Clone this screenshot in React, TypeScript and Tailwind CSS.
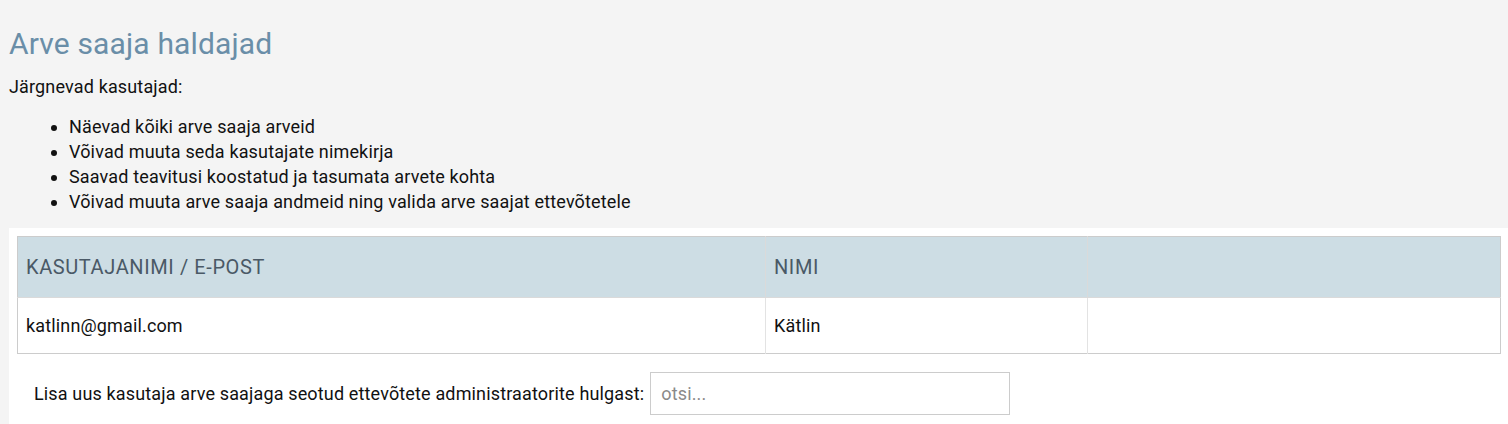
const ITEMS = [
  'Näevad kõiki arve saaja arveid',
  'Võivad muuta seda kasutajate nimekirja',
  'Saavad teavitusi koostatud ja tasumata arvete kohta',
  'Võivad muuta arve saaja andmeid ning valida arve saajat ettevõtetele',
];

const USERS = [{ email: 'katlinn@gmail.com', name: 'Kätlin' }];

export default function App() {
  return (
    <div
      className="min-h-[424px] bg-[#f4f4f4] pl-[9px] pt-[26px] text-[18px] tracking-[0.15px] text-[#111]"
      style={{ fontFamily: 'Roboto, "Liberation Sans", sans-serif' }}
    >
      <h1 className="text-[30px] leading-[36px] font-normal tracking-[0.15px] text-[#6a8ea8]">Arve saaja haldajad</h1>

      <p className="mt-[12px] leading-[25px]">Järgnevad kasutajad:</p>
      <ul className="mt-[15px] list-disc pl-[60px] leading-[25px]">
        {ITEMS.map((t) => (
          <li key={t}>{t}</li>
        ))}
      </ul>

      <div className="mt-[14px] bg-white pt-[8px] pb-[10px] pl-[8px] pr-[7px]">
        <table className="w-full border-collapse border border-[#cccccc]">
          <thead>
            <tr className="bg-[#cddde4] text-[20px] tracking-[0.6px] text-[#4a5966]">
              <th className="h-[61px] w-[748px] border-r border-[#dadada] px-[8px] text-left font-normal">
                KASUTAJANIMI / E-POST
              </th>
              <th className="w-[322px] border-r border-[#dadada] px-[8px] text-left font-normal">NIMI</th>
              <th className="font-normal" />
            </tr>
          </thead>
          <tbody>
            {USERS.map((u) => (
              <tr key={u.email} className="border-t border-[#dadada]">
                <td className="h-[56px] border-r border-[#e3e3e3] px-[8px]">{u.email}</td>
                <td className="border-r border-[#e3e3e3] px-[8px]">{u.name}</td>
                <td />
              </tr>
            ))}
          </tbody>
        </table>

        <div className="mt-[18px] flex items-center pl-[17px]">
          <span>Lisa uus kasutaja arve saajaga seotud ettevõtete administraatorite hulgast:</span>
          <input
            className="ml-[6px] h-[43px] w-[360px] border border-[#cccccc] bg-white px-[10px] text-[18px] outline-none placeholder:text-[#8a8a8a]"
            placeholder="otsi..."
          />
        </div>
      </div>
    </div>
  );
}
